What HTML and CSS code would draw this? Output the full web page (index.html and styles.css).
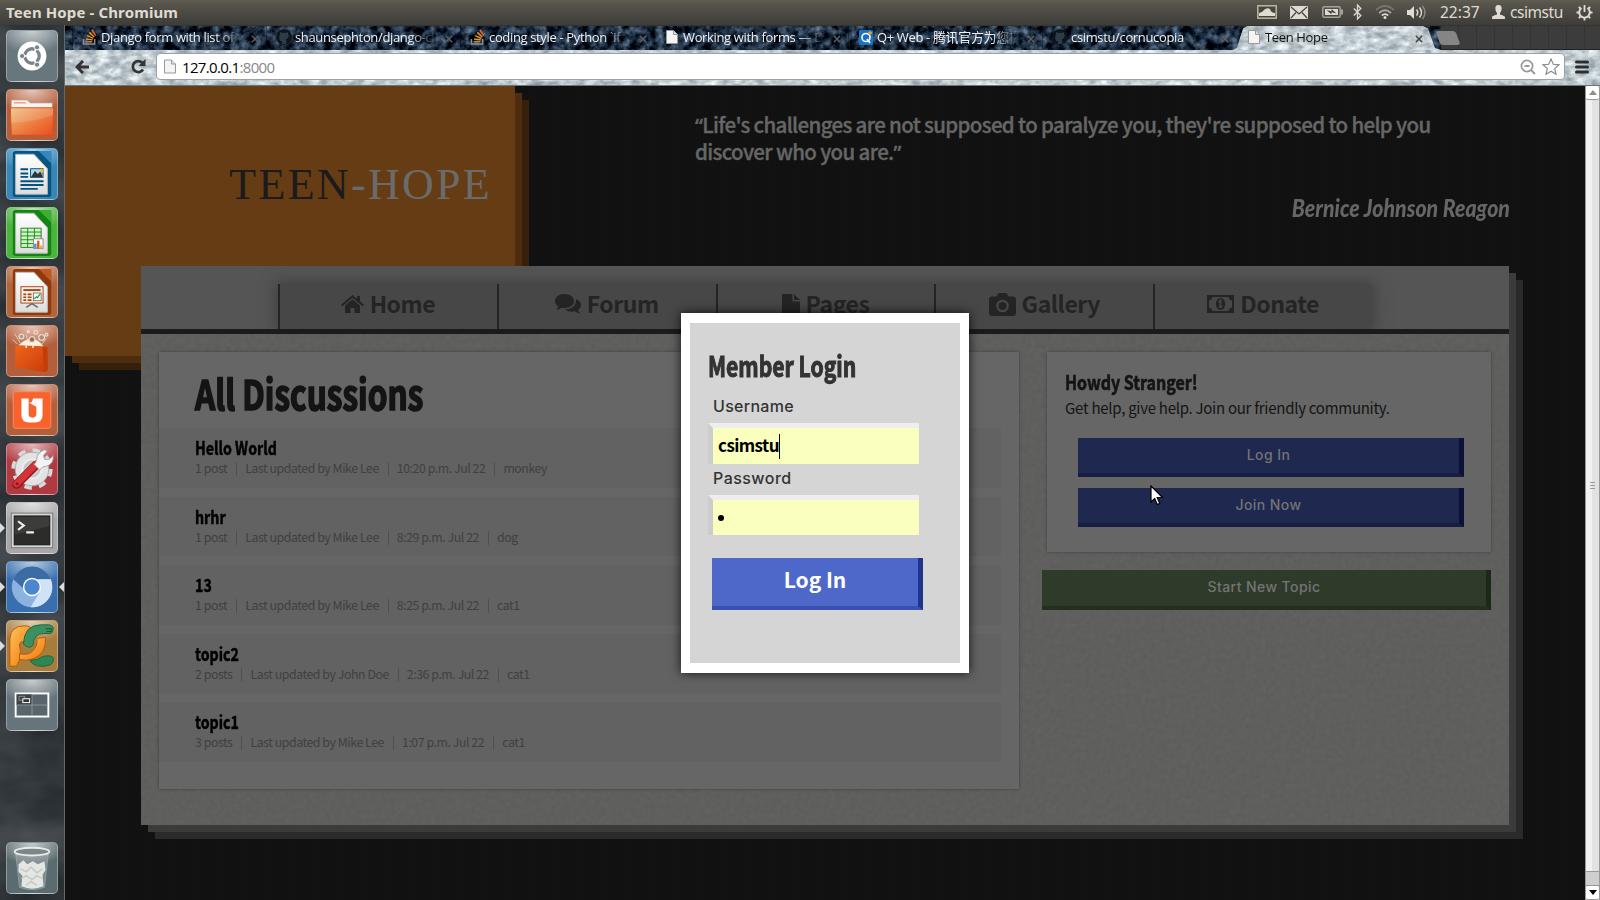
FILE: index.html
```html
<!DOCTYPE html>
<html lang="en">
<head>
<meta charset="utf-8">
<title>Teen Hope - Chromium</title>
<link rel="stylesheet" href="styles.css">
</head>
<body>
<svg class="defs" width="0" height="0" aria-hidden="true">
  <defs>
    <filter id="ice" x="0" y="0" width="100%" height="100%" color-interpolation-filters="sRGB">
      <feTurbulence type="fractalNoise" baseFrequency="0.09 0.16" numOctaves="5" seed="4"/>
      <feColorMatrix values="0.6 0 0 0 0.46  0.56 0 0 0 0.52  0.54 0 0 0 0.55  0 0 0 0 1"/>
    </filter>
    <filter id="rock" x="0" y="0" width="100%" height="100%" color-interpolation-filters="sRGB">
      <feTurbulence type="fractalNoise" baseFrequency="0.12 0.12" numOctaves="5" seed="9"/>
      <feColorMatrix values="0.75 0 0 0 -0.26  0.85 0 0 0 -0.25  0.95 0 0 0 -0.23  0 0 0 0 1"/>
    </filter>
    <filter id="wall" x="0" y="0" width="100%" height="100%" color-interpolation-filters="sRGB">
      <feTurbulence type="fractalNoise" baseFrequency="0.012 0.02" numOctaves="4" seed="12"/>
      <feColorMatrix values="0.22 0 0 0 0.11  0.22 0 0 0 0.13  0.22 0 0 0 0.145  0 0 0 0 1"/>
    </filter>
    <filter id="paper" x="0" y="0" width="100%" height="100%" color-interpolation-filters="sRGB">
      <feTurbulence type="fractalNoise" baseFrequency="0.2" numOctaves="3" seed="2"/>
      <feColorMatrix values="0.035 0 0 0 0.355  0.035 0 0 0 0.355  0.035 0 0 0 0.351  0 0 0 0 1"/>
    </filter>
    <linearGradient id="sheet" x1="0" y1="0" x2="0" y2="1"><stop offset="0" stop-color="#fff"/><stop offset="1" stop-color="#ddd"/></linearGradient>
    <linearGradient id="folder" x1="0" y1="0" x2="1" y2="1"><stop offset="0" stop-color="#f0bd7c"/><stop offset=".5" stop-color="#ec8244"/><stop offset="1" stop-color="#ee4a1c"/></linearGradient>
    <linearGradient id="bag" x1="0" y1="0" x2="1" y2="1"><stop offset="0" stop-color="#f0641c"/><stop offset="1" stop-color="#c83c08"/></linearGradient>
    <linearGradient id="pyc" x1="0" y1="0" x2="1" y2="1"><stop offset="0" stop-color="#ffc05a"/><stop offset="1" stop-color="#f07808"/></linearGradient>
    <symbol id="so" viewBox="0 0 16 17"><path d="M1 10.500v5.500h12v-5.500" fill="none" stroke="#8d8f92" stroke-width="1.500"/><path d="M3.500 13.500h7" stroke="#b08a5a" stroke-width="1.500"/><path d="M3.800 10.600l7 1M5 7l6.500 3M7.200 3.600l5.400 4.900" stroke="#f0961e" stroke-width="1.500"/><path d="M10 .8l4 6.200" stroke="#f0642a" stroke-width="1.600"/></symbol>
    <symbol id="gh" viewBox="0 0 16 16"><circle cx="8" cy="8" r="7.800" fill="#101418"/><path d="M6 15v-2.500C3.600 11.900 3 10.200 3.300 8.200L4 4.400V3l2 .9q2-.5 4 0l2-.9v1.600c1.700 3-.1 5.500-2.400 5.900.5.500.7 1 .7 2V15z" fill="#2c3c48"/></symbol>
    <symbol id="doc" viewBox="0 0 12 14"><path d="M.5.500h7l4 4v9H.5z" fill="#f4f4f4" stroke="#999"/><path d="M7.500.500v4h4" fill="#ddd" stroke="#999"/></symbol>
    <symbol id="x" viewBox="0 0 8 8"><path d="M.8.800l6.400 6.400M7.200.800L.8 7.200" stroke="currentColor" stroke-width="1.500"/></symbol>
  </defs>
</svg>

<header class="topbar">
  <span class="topbar-title">Teen Hope - Chromium</span>
  <div class="indicators">
    <svg class="i-pic" width="20" height="14" viewBox="0 0 20 14"><rect x=".8" y=".8" width="18.400" height="12.400" fill="#48463f" stroke="#b9b8a0" stroke-width="1.500"/><path d="M2 11V8q3 0 5-3 3-3 6-1 1 4 5 4v3z" fill="#dfdbd2"/></svg>
    <svg class="i-mail" width="18" height="13" viewBox="0 0 18 13"><rect width="18" height="13" rx="1" fill="#dfdbd2"/><path d="M1 1l8 7 8-7M1 12l5-5.500M17 12l-5-5.500" fill="none" stroke="#45433d" stroke-width="1.200"/></svg>
    <svg class="i-bat" width="21" height="12" viewBox="0 0 21 12"><rect x=".8" y=".8" width="17.400" height="10.400" rx="1.500" fill="none" stroke="#a5a297" stroke-width="1.500"/><rect x="3" y="3" width="13" height="6" fill="#dfdbd2"/><rect x="19" y="3.500" width="2" height="5" fill="#a5a297"/><path d="M4.500 4l5 1.200V3l5 4.500-5-1.200v2.200z" fill="#45433d"/></svg>
    <svg class="i-bt" width="9" height="16" viewBox="0 0 9 16"><path d="M.8 4.500l7 7L4.500 15V1l3.300 3.500-7 7" fill="none" stroke="#dfdbd2" stroke-width="1.300"/></svg>
    <svg class="i-wifi" width="20" height="14" viewBox="0 0 20 14"><path d="M1 5Q10-3 19 5" fill="none" stroke="#77756c" stroke-width="1.700"/><path d="M4 8q6-5.500 12 0" fill="none" stroke="#aaa79d" stroke-width="1.700"/><path d="M6.800 10.500q3.200-2.800 6.400 0" fill="none" stroke="#dfdbd2" stroke-width="1.700"/><circle cx="10" cy="12.500" r="1.500" fill="#dfdbd2"/></svg>
    <svg class="i-vol" width="20" height="15" viewBox="0 0 20 15"><path d="M0 5h3l4-4v13l-4-4H0z" fill="#dfdbd2"/><path d="M9.500 4.500q2.500 3 0 6M12.500 2.500q4 5 0 10" fill="none" stroke="#dfdbd2" stroke-width="1.500"/><path d="M15.500 1q5 6.500 0 13" fill="none" stroke="#8b887e" stroke-width="1.500"/></svg>
    <span class="i-clock">22:37</span>
    <svg class="i-user" width="13" height="14" viewBox="0 0 13 14"><path d="M6.500 0C9 0 9.800 1.500 9.600 4c-.2 2-.8 3-1.600 4v1.500c2 1 5 1 5 3V14H0v-1.500c0-2 3-2 5-3V8C4.200 7 3.600 6 3.400 4 3.200 1.500 4 0 6.500 0z" fill="#dfdbd2"/></svg>
    <span class="i-name">csimstu</span>
    <svg class="i-gear" width="17" height="17" viewBox="0 0 17 17"><path d="M5.500 4a5.300 5.300 0 1 0 6 0" fill="none" stroke="#dfdbd2" stroke-width="2"/><path d="M8.500 1v7" stroke="#dfdbd2" stroke-width="1.800"/><path d="M.5 8.500H3M14 8.500h2.500M8.500 14v2.500M2.800 14.200l1.700-1.700M14.200 14.200l-1.700-1.700M2.800 2.800l1.700 1.700M14.200 2.800l-1.700 1.700" stroke="#dfdbd2" stroke-width="1.800"/></svg>
  </div>
</header>

<div class="desktop">
  <nav class="launcher">
    <svg class="texture"><rect width="100%" height="100%" filter="url(#wall)"/></svg>
    <div class="tile t-dash"><svg viewBox="0 0 52 52"><circle cx="26" cy="26" r="15" fill="#fff"/><circle cx="26" cy="26" r="7.500" fill="none" stroke="#78848a" stroke-width="3.500"/><path d="M26 26L14 26M26 26l6-10.400M26 26l6 10.400" stroke="#fff" stroke-width="1.800"/><circle cx="26" cy="26" r="5.500" fill="#fff"/><g fill="#78848a" stroke="#fff"><circle cx="15.700" cy="26" r="2.700"/><circle cx="31.200" cy="17" r="2.700"/><circle cx="31.200" cy="35" r="2.700"/></g></svg></div>
    <div class="tile t-orange"><svg viewBox="0 0 52 52"><path d="M4.500 20V11.500q0-1 1-1h15l4 3h22.500V20z" fill="#f6f4f2" stroke="#b9aaa0" stroke-width=".7"/><path d="M7 12.500h12l1.500 1.500H7z" fill="#f0a080"/><path d="M3.500 18.500h45l-1 28.500h-43z" fill="url(#folder)" stroke="#d6521c"/><path d="M4 19h44v7Q26 34 4 34z" fill="#fff" opacity=".15"/></svg></div>
    <div class="tile t-blue"><svg viewBox="0 0 52 52"><rect x="6" y="2" width="40" height="48" rx="3" fill="#075583"/><path d="M33 2h13v13z" fill="#3389b9"/><path d="M9 5.500h19l14 15V47H9z" fill="url(#sheet)" stroke="#bbb"/><path d="M14 21h8M14 25.500h8M14 29h8M14 33.500h24M14 37.500h24M14 41.500h18" stroke="#06527f" stroke-width="2"/><rect x="24.500" y="20.500" width="13" height="9" fill="#a9d6ef" stroke="#06527f"/><path d="M25 29l4-6 3 3 3-3 2 6z" fill="#333"/><circle cx="36" cy="22.500" r="2" fill="#f2c118"/></svg></div>
    <div class="tile t-green"><svg viewBox="0 0 52 52"><rect x="6" y="2" width="40" height="48" rx="3" fill="#128512"/><path d="M33 2h13v13z" fill="#3fae34"/><path d="M9 5.500h19l14 15V47H9z" fill="url(#sheet)" stroke="#bbb"/><path d="M14.500 21h21v20h-21zM14.500 25h21M14.500 29h21M14.500 33h21M14.500 37h21M21.500 21v20M28.500 21v20" fill="#d2f5c8" stroke="#1c8a1c"/><rect x="27.500" y="32" width="10" height="10" fill="#fff" stroke="#888"/><path d="M29.500 42v-5" stroke="#3a9ae0" stroke-width="2.500"/><path d="M32.500 42v-8" stroke="#e05a1c" stroke-width="2.500"/><path d="M35.500 42v-3" stroke="#f0b41c" stroke-width="2.500"/></svg></div>
    <div class="tile t-brown"><svg viewBox="0 0 52 52"><rect x="6" y="2" width="40" height="48" rx="3" fill="#93380b"/><path d="M33 2h13v13z" fill="#bb5a24"/><path d="M9 5.500h19l14 15V47H9z" fill="url(#sheet)" stroke="#bbb"/><rect x="14.500" y="20.500" width="23" height="17" fill="#fbeee6" stroke="#a54514"/><path d="M17 24h18" stroke="#a54514" stroke-width="2"/><path d="M17 28.500h3M17 31.500h3M17 34.500h3M21.500 28.500h4M21.500 31.500h4M21.500 34.500h4" stroke="#a54514" stroke-width="1.700"/><rect x="27.500" y="27" width="8" height="8" fill="#fff" stroke="#777"/><path d="M28.500 33l2-2 1 1 3-4" fill="none" stroke="#2aa02a" stroke-width="1.300"/><path d="M26 38l-6 4M26 38l6 4" stroke="#666" stroke-width="1.500"/></svg></div>
    <div class="tile t-orange"><svg viewBox="0 0 52 52"><path d="M12 20q14-14 26 1z" fill="#fff2d8"/><g fill="none" stroke="#f0d8c8" stroke-width="1.300"><circle cx="15" cy="11" r="2.500" fill="#8fa0a8"/><circle cx="26" cy="14" r="3" fill="#8a7468"/><circle cx="30" cy="6.500" r="2"/><circle cx="36" cy="12" r="3" fill="#a98d80"/><circle cx="41" cy="9" r="1.500"/><circle cx="22" cy="6" r="1.200"/></g><path d="M8 8l6 10M20 9l2 8M41 13l-5 6M6 14l5 5" stroke="#ffd8b8" stroke-width=".8"/><path d="M8.500 20.500L42 22l.5 24-4 2L8.500 43z" fill="url(#bag)"/><path d="M37 21l5 1 .5 24-4 2z" fill="#c13d0a"/><path d="M20 23v-5h7v5" fill="none" stroke="#ffeeda" stroke-width="1.500"/></svg></div>
    <div class="tile t-orange"><svg viewBox="0 0 52 52"><rect x="6.500" y="7" width="39" height="38" rx="2" fill="#f9622c" stroke="#ff8a5c"/><path d="M15 14h7.500v16q0 4 4 4t4-4V14H37v17q0 8-8 8h-6q-8 0-8-8z" fill="#fff"/><path d="M22 18q4 2 5-4h4v9" fill="#fff"/></svg></div>
    <div class="tile t-red"><svg viewBox="0 0 52 52"><circle cx="26" cy="26" r="19" fill="none" stroke="#d9d9d9" stroke-width="5" stroke-dasharray="7.500 7.420"/><circle cx="26" cy="26" r="17.500" fill="#e2e2e2" stroke="#aaa"/><circle cx="26" cy="26" r="10" fill="#c9c9c9" stroke="#eee" stroke-width="2"/><path d="M10 42l20-20" stroke="#921418" stroke-width="9" stroke-linecap="round"/><path d="M10 41.500L31 20.500" stroke="#d33438" stroke-width="7" stroke-linecap="round"/><path d="M28 21q2-1 3-5 0-7 8-10l3 1-4 5 1 4 5 0 4-4q1 9-7 11-4 0-7 4z" fill="#f3f3f3" stroke="#999" stroke-width=".8"/><circle cx="10.500" cy="41.500" r="1.500" fill="#8a1418"/></svg></div>
    <div class="tile t-grey running"><svg viewBox="0 0 52 52"><rect x="4.500" y="10.500" width="43" height="36" fill="#d5d5d5" stroke="#777"/><rect x="7.500" y="13.500" width="37" height="30" fill="#2c2c2a" stroke="#111"/><path d="M8 14h36v10L8 33z" fill="#fff" opacity=".08"/><path d="M11.500 19l6 4.500-6 4.500M20 30.500h8" fill="none" stroke="#eee" stroke-width="2.200"/></svg></div>
    <div class="tile t-chrome running focused"><svg viewBox="0 0 52 52"><circle cx="26" cy="26" r="21" fill="#8cb3e0"/><path d="M6.500 18A21 21 0 0 1 45.500 18H26q-9 1-9.500 9z" fill="#3c6ca6"/><path d="M45.500 18a21 21 0 0 1-21 29l9-15q4-7-2-14z" fill="#d0e2f5"/><circle cx="26" cy="26" r="9.500" fill="#fff"/><circle cx="26" cy="26" r="8" fill="#4b86cf"/></svg></div>
    <div class="tile t-pycharm running"><svg viewBox="0 0 52 52"><path d="M3 46V18Q4 5 18 5q7 0 8 4-5 6-6 14-6-4-7 2l1 7q0 9-4 15H3z" fill="url(#pyc)" stroke="#b75a08"/><path d="M13 34q10 2 14-3 5-5 4-13l9-1q1 17-12 22-8 3-15 1z" fill="url(#pyc)" stroke="#b75a08"/><path d="M17 24q1-20 18-20h9q5 1 4 5-1 5-5 4l-5 0q-10 0-11 12-4 5-10-1z" fill="#3c9060" stroke="#1c6a3c"/><path d="M24 41q8 0 13-4 8-2 11 1 2 8-9 9-11 1-15-6z" fill="#2f8554" stroke="#1c6a3c"/><path d="M40 8h6v3h-5" fill="none" stroke="#14532d"/></svg></div>
    <div class="tile t-work"><svg viewBox="0 0 52 52"><rect x="9" y="14" width="34" height="24" fill="#59656b" stroke="#fff" stroke-width="2"/><rect x="10" y="15" width="16" height="11" fill="#3c4246"/><path d="M26 15v22M10 26h32" stroke="#8b969b"/><rect x="12.500" y="17" width="6" height="4" fill="none" stroke="#888"/><rect x="16.500" y="19.500" width="7" height="4" fill="#333" stroke="#fff"/></svg></div>
    <div class="tile t-trash"><svg viewBox="0 0 52 52"><path d="M9 10h34l-4 36q-13 5-26 0z" fill="#a8b2b2" opacity=".45" stroke="#cdd4d4"/><path d="M12 22l5-4 4 4 6-3 5 3 7-3 1 9-3 5 1 12q-12 5-23 0l1-11-4-4z" fill="#e4e6e4"/><path d="M14 27l6 3 5-5 6 6 6-4M15 37l5-3 6 4 5-4 6 3M20 44l5-4 6 4" fill="none" stroke="#c3c8c6" stroke-width="1.500"/><ellipse cx="26" cy="9" rx="18" ry="4" fill="#7b8685" stroke="#e6eaea" stroke-width="2"/></svg></div>
  </nav>

  <section class="browser">
    <div class="tabstrip">
      <svg class="texture"><rect width="100%" height="100%" filter="url(#rock)"/></svg>
      <div class="tab"><svg width="14" height="16"><use href="#so"/></svg><span class="tab-text">Django form with list of</span><svg class="tab-x" width="8" height="8"><use href="#x"/></svg></div>
      <div class="tab"><svg width="16" height="16"><use href="#gh"/></svg><span class="tab-text">shaunsephton/django-ck</span><svg class="tab-x" width="8" height="8"><use href="#x"/></svg></div>
      <div class="tab"><svg width="14" height="16"><use href="#so"/></svg><span class="tab-text">coding style - Python `if</span><svg class="tab-x" width="8" height="8"><use href="#x"/></svg></div>
      <div class="tab"><svg width="12" height="14"><use href="#doc"/></svg><span class="tab-text">Working with forms — D</span><svg class="tab-x" width="8" height="8"><use href="#x"/></svg></div>
      <div class="tab"><svg width="14" height="15" viewBox="0 0 14 15"><rect width="14" height="15" rx="1" fill="#1674c0"/><circle cx="7" cy="7.500" r="4" fill="none" stroke="#fff" stroke-width="1.600"/><path d="M8 9l3 4" stroke="#fff" stroke-width="1.600"/><path d="M11 1v4M9 3h4" stroke="#f5a21c" stroke-width="1.300"/></svg><span class="tab-text">Q+ Web - 腾讯官方为您提</span><svg class="tab-x" width="8" height="8"><use href="#x"/></svg></div>
      <div class="tab"><svg width="16" height="16"><use href="#gh"/></svg><span class="tab-text">csimstu/cornucopia</span><svg class="tab-x" width="8" height="8"><use href="#x"/></svg></div>
      <div class="tab active"><div class="tab-shape"><svg class="texture"><rect width="100%" height="100%" filter="url(#ice)"/></svg></div><svg width="12" height="14"><use href="#doc"/></svg><span class="tab-text">Teen Hope</span><svg class="tab-x" width="8" height="8"><use href="#x"/></svg></div>
      <div class="tab-rest"><span class="newtab"></span></div>
    </div>

    <div class="toolbar">
      <svg class="texture"><rect width="100%" height="100%" filter="url(#ice)"/></svg>
      <svg class="b-back" width="15" height="14" viewBox="0 0 15 14"><path d="M8 1L2 7l6 6M2.500 7H14" fill="none" stroke="#333" stroke-width="3"/></svg>
      <svg class="b-fwd" width="15" height="14" viewBox="0 0 15 14"><path d="M7 1l6 6-6 6M12.500 7H1" fill="none" stroke="#a9b3b9" stroke-width="3" opacity=".6"/></svg>
      <svg class="b-load" width="15" height="15" viewBox="0 0 15 15"><path d="M12 10.500A5.500 5.500 0 1 1 11.500 4" fill="none" stroke="#333" stroke-width="2.800"/><path d="M14.500 0v7h-7z" fill="#333"/></svg>
      <div class="omnibox">
        <svg width="12" height="15"><use href="#doc"/></svg>
        <span class="url">127.0.0.1<i>:8000</i></span>
        <svg class="o-zoom" width="16" height="16" viewBox="0 0 16 16"><circle cx="7" cy="7" r="5.600" fill="none" stroke="#999" stroke-width="1.700"/><path d="M4.500 7h5M11 11l4 4" stroke="#999" stroke-width="1.900"/></svg>
        <svg width="18" height="17" viewBox="0 0 18 17"><path d="M9 1l2.300 5.300 5.700.5-4.300 3.800 1.300 5.600L9 13.300 4 16.200l1.300-5.600L1 6.800l5.700-.5z" fill="#fff" stroke="#8a8a8a" stroke-width="1.200"/></svg>
      </div>
      <svg class="b-menu" width="14" height="14" viewBox="0 0 14 14"><path d="M1.500 2h11M1.500 7h11M1.500 12h11" stroke="#2c2f31" stroke-width="3" stroke-linecap="round"/></svg>
    </div>

    <div class="viewport">
      <main class="page">
        <div class="hero">
          <div class="brand"><span class="brand-text">TEEN<em>-HOPE</em></span></div>
          <div class="quote">
            <div class="quote-text"><p><b>“</b>Life's challenges are not supposed to paralyze you, they're supposed to help you</p><p>discover who you are.<b>”</b></p></div>
            <p class="quote-by">Bernice Johnson Reagon</p>
          </div>
        </div>

        <div class="container">
          <nav class="menu">
            <div class="menu-items">
              <a class="menu-item"><svg width="23" height="18" viewBox="0 0 23 18"><path d="M11.500 4.200L19 10.500V18h-5.500v-5h-4v5H4v-7.500zM11.500 0l4.500 3.800V1h3v5.300l4 3.400-1.300 1.500L11.500 2.700 1.300 11.200 0 9.700z" fill="#242424"/></svg><span>Home</span></a>
              <a class="menu-item"><svg width="26" height="21" viewBox="0 0 26 21"><path d="M9.500 0C15 0 19 3.200 19 7s-4 7-9.500 7q-1.500 0-3-.3Q4.500 15.500 1 16q2-1.500 2.200-3.500C1.200 11.200 0 9.300 0 7c0-3.800 4-7 9.500-7zM21 5c3 1.300 5 3.500 5 6q0 3-2.700 5 .2 2 2.200 3.500-3.500-.3-5.500-2.300-5.500 1.500-10-1.700C16.500 15.500 21.500 11.500 21 5z" fill="#242424"/></svg><span>Forum</span></a>
              <a class="menu-item"><svg width="18" height="21" viewBox="0 0 18 21"><path d="M0 1q0-1 1-1h9.500v7.500H18V20q0 1-1 1H1q-1 0-1-1zM12 0l6 6h-6z" fill="#242424"/></svg><span>Pages</span></a>
              <a class="menu-item"><svg width="27" height="23" viewBox="0 0 27 23"><path fill-rule="evenodd" d="M3 3.500h4.500L9 .8q.5-.8 1.500-.8h6q1 0 1.500.8l1.500 2.700H24q3 0 3 3V20q0 3-3 3H3q-3 0-3-3V6.500q0-3 3-3zm10.500 3.200a6.300 6.300 0 1 0 0 12.600 6.300 6.300 0 0 0 0-12.600zm0 2.300a4 4 0 1 1 0 8 4 4 0 0 1 0-8z" fill="#242424"/></svg><span>Gallery</span></a>
              <a class="menu-item"><svg width="27" height="18" viewBox="0 0 27 18"><path fill-rule="evenodd" d="M0 0h27v18H0zM5.500 2Q5 5 2 5.500v7q3 .5 3.500 3.500h16q.5-3 3.500-3.500v-7Q22 5 21.500 2z" fill="#242424"/><ellipse cx="13.500" cy="9" rx="4.700" ry="6" fill="#242424"/><path d="M11.500 7l2-1.500v6M11.500 12h4" fill="none" stroke="#474747" stroke-width="1.700"/></svg><span>Donate</span></a>
            </div>
          </nav>
          <div class="content">
            <svg class="texture"><rect width="100%" height="100%" filter="url(#paper)"/></svg>
            <section class="panel discussions">
              <h1><span>All Discussions</span></h1>
              <article class="topic"><h2><span>Hello World</span></h2><p><span>1 post</span><span>Last updated by Mike Lee</span><span>10:20 p.m. Jul 22</span><span>monkey</span></p></article>
              <article class="topic"><h2><span>hrhr</span></h2><p><span>1 post</span><span>Last updated by Mike Lee</span><span>8:29 p.m. Jul 22</span><span>dog</span></p></article>
              <article class="topic"><h2><span>13</span></h2><p><span>1 post</span><span>Last updated by Mike Lee</span><span>8:25 p.m. Jul 22</span><span>cat1</span></p></article>
              <article class="topic"><h2><span>topic2</span></h2><p><span>2 posts</span><span>Last updated by John Doe</span><span>2:36 p.m. Jul 22</span><span>cat1</span></p></article>
              <article class="topic"><h2><span>topic1</span></h2><p><span>3 posts</span><span>Last updated by Mike Lee</span><span>1:07 p.m. Jul 22</span><span>cat1</span></p></article>
            </section>
            <aside class="side">
              <section class="panel welcome">
                <h3><span>Howdy Stranger!</span></h3>
                <p>Get help, give help. Join our friendly community.</p>
                <a class="btn blue">Log In</a>
                <a class="btn blue">Join Now</a>
              </section>
              <a class="btn green">Start New Topic</a>
            </aside>
          </div>
        </div>

        <form class="login">
          <h3><span>Member Login</span></h3>
          <label>Username</label>
          <div class="field"><span class="value">csimstu</span><span class="caret"></span></div>
          <label class="second">Password</label>
          <div class="field pass"><span class="dot"></span></div>
          <div class="submit">Log In</div>
        </form>

        <svg class="cursor" width="14" height="21" viewBox="0 0 14 21"><path d="M1 1v16l3.700-3.500 2.600 6 2.500-1.100-2.600-5.900h5.300z" fill="#fff" stroke="#000" stroke-width="1.200"/></svg>
      </main>
      <div class="scrollbar">
        <div class="sb-btn"><svg width="8" height="5" viewBox="0 0 8 5"><path d="M4 0l4 5H0z" fill="#8f8f8f"/></svg></div>
        <div class="sb-thumb"><i></i><i></i><i></i></div>
        <div class="sb-gap"></div>
        <div class="sb-btn"><svg width="8" height="5" viewBox="0 0 8 5"><path d="M0 0h8L4 5z" fill="#000"/></svg></div>
      </div>
    </div>
  </section>
</div>
</body>
</html>
```

FILE: styles.css
```css
* { box-sizing: border-box; margin: 0; padding: 0; }
body {
  width: 1600px; height: 900px; overflow: hidden;
  display: flex; flex-direction: column;
  background: #111; color: #141414;
  font-family: "Noto Sans CJK SC", "Noto Sans", sans-serif;
}
svg { display: block; flex: none; }
.defs { position: absolute; }
.texture { position: absolute; inset: 0; width: 100%; height: 100%; }

/* system panel */
.topbar {
  height: 25px; flex: none; padding: 0 7px 1px 6px;
  display: flex; justify-content: space-between; align-items: center;
  background: linear-gradient(#5f5d50, #55534a 20%, #3d3c38);
  color: #dfdbd2; font-family: "Noto Sans", sans-serif;
}
.topbar-title { font-size: 15px; font-weight: 700; line-height: 24px; letter-spacing: .12px; }
.indicators { display: flex; align-items: center; height: 24px; font-size: 15.500px; line-height: 24px; }
.i-mail { margin-left: 13px; }
.i-bat { margin-left: 14px; }
.i-bt { margin-left: 10px; }
.i-wifi { margin-left: 13px; }
.i-vol { margin-left: 12px; }
.i-clock { margin-left: 13px; width: 39px; }
.i-user { margin-left: 13px; }
.i-name { margin-left: 5px; width: 53px; letter-spacing: -.45px; }
.i-gear { margin-left: 13px; }

.desktop { flex: 1; display: flex; min-height: 0; }

/* launcher */
.launcher {
  position: relative; width: 65px; flex: none; padding: 5px 0 6px 6px;
  display: flex; flex-direction: column; gap: 7px; border-right: 1px solid #65696b;
}
.tile {
  position: relative; width: 52px; height: 52px; border-radius: 5px; flex: none;
  border: 1px solid rgba(255,255,255,.3);
  background-image: radial-gradient(ellipse 70% 45% at 50% 0, rgba(255,255,255,.65), rgba(255,255,255,0));
}
.tile > svg { width: 50px; height: 50px; }
.t-dash { background-color: #68777e; }
.t-orange { background-color: #b45f3c; }
.t-blue { background-color: #3886b6; }
.t-green { background-color: #4db33f; }
.t-brown { background-color: #b1653c; }
.t-red { background-color: #b03a42; }
.t-grey { background-color: #a8a6a6; }
.t-chrome { background-color: #396fae; }
.t-pycharm { background-color: #a87c3c; }
.t-work { background-color: #66747b; }
.t-trash { background-color: #5b6c70; margin-top: auto; }
.running::before {
  content: ""; position: absolute; left: -7px; top: 20px;
  border: 5px solid transparent; border-left-color: #ddd; border-right: 0;
}
.focused::after {
  content: ""; position: absolute; right: -7px; top: 20px;
  border: 5px solid transparent; border-right-color: #ddd; border-left: 0;
}

/* browser chrome */
.browser { flex: 1; display: flex; flex-direction: column; min-width: 0; }
.tabstrip { position: relative; height: 25px; flex: none; display: flex; padding-left: 7px; border-top: 1px solid #333; }
.tab {
  position: relative; width: 194px; flex: none; height: 24px; padding: 0 7px 2px 9px;
  display: flex; align-items: center; color: #eef2f5;
  font: 13px/22px "Open Sans", "Noto Sans CJK SC", sans-serif;
  border-left: 1px solid rgba(0,0,0,.35);
}
.tab > svg:not(.tab-x) { width: 16px; margin-right: 3px; }
.tab-text {
  position: relative; width: 146px; overflow: hidden; white-space: nowrap; letter-spacing: -.35px;
  -webkit-mask-image: linear-gradient(90deg, #000 78%, transparent 97%);
  mask-image: linear-gradient(90deg, #000 78%, transparent 97%);
}
.tab-x { position: relative; top: 2px; margin-left: auto; color: #5a5f65; }
.tab.active { width: 205px; color: #111; border: 0; padding: 0 18px 2px 10px; }
.tab.active > svg { position: relative; }
.tab.active .tab-x { color: #444; }
.tab-shape { position: absolute; inset: 0 -6px 0 -3px; clip-path: polygon(0 100%, 4px 90%, 10px 10%, 14px 0, 190px 0, 195px 10%, 202px 92%, 208px 100%); }
.tab-rest { position: relative; flex: 1; background: repeating-linear-gradient(90deg, #3c3c3c 0 17px, #333 17px 18px); border-bottom: 1px solid #222; }
.newtab { display: block; width: 20px; height: 14px; margin: 5px 0 0 -3px; background: #858585; border-radius: 3px; transform: skewX(20deg); }
.toolbar { position: relative; height: 36px; flex: none; display: flex; align-items: center; padding: 0 11px 2px 10px; border-bottom: 1px solid #6d7679; }
.toolbar > svg:not(.texture), .omnibox { position: relative; }
.b-fwd { margin-left: 14px; }
.b-load { margin-left: 12px; }
.omnibox {
  margin: 0 10px 0 10px; flex: 1; height: 27px; padding: 0 4px 0 7px; display: flex; align-items: center;
  background: #fff; border: 1px solid #98a2a8; border-radius: 4px;
}
.url { flex: 1; margin-left: 6px; color: #000; font: 15px/24px "Open Sans", sans-serif; letter-spacing: -.65px; }
.url i { font-style: normal; color: #888; }
.o-zoom { margin-right: 6px; }

/* page */
.viewport { flex: 1; display: flex; min-height: 0; }
.page {
  position: relative; flex: 1; overflow: hidden; background-color: #121212;
  background-image: repeating-linear-gradient(90deg, rgba(0,0,0,.1) 0 1px, transparent 1px 3px);
}
.hero { display: flex; height: 180px; }
.brand {
  width: 450px; height: 270px; flex: none; padding: 69px 23px 0 0; text-align: right;
  background: #663c14;
  box-shadow: 7px 7px 0 #4e2d0f, 14px 14px 0 #37200b;
}
.brand-text { font: 44px/60px "Liberation Serif", serif; color: #1b1b1b; letter-spacing: 2.300px; white-space: nowrap; }
.brand-text em { font-style: normal; color: #6b6b6b; }
.quote { width: 815px; margin-left: 180px; padding-top: 25px; color: #666; }
.quote-text { font-size: 20.500px; line-height: 27px; font-weight: 500; white-space: nowrap; letter-spacing: -.66px; -webkit-text-stroke: .35px #666; }
.quote-text b { font-family: "Noto Sans", sans-serif; font-weight: 500; line-height: 20px; }
.quote-by { margin-top: 25px; text-align: right; font: italic 900 24px/36px "Lato", sans-serif; transform: scaleX(.887); transform-origin: right; }

.container { position: relative; width: 1368px; height: 559px; margin-left: 76px; box-shadow: 7px 7px 0 #3b3b3b, 14px 14px 0 #2a2a2a; }
.menu { height: 68px; background: #555; border-bottom: 5px solid #1b1b1b; padding: 18px 137px 0; overflow: hidden; }
.menu-items { display: flex; height: 45px; background: #474747; box-shadow: 0 0 14px 2px #3f3f3f; }
.menu-item {
  flex: 1; display: flex; align-items: center; justify-content: center; gap: 6px; padding: 0 1px 7px 0;
  border-left: 2px solid #242424; color: #242424; font-size: 23px; line-height: 38px; font-weight: 700; letter-spacing: -.45px;
}
.menu-item svg { position: relative; top: 1px; }
.content { position: relative; height: 491px; display: flex; padding: 18px; align-items: flex-start; }
.panel { position: relative; background: #666; box-shadow: 0 0 3px rgba(0,0,0,.35); }
.discussions { width: 860px; height: 437px; padding-top: 15px; }
h1, h2, h3 { font-weight: 700; white-space: nowrap; }
h1 span, h2 span, h3 span { display: inline-block; transform-origin: left; }
h1 { height: 50px; margin: 0 0 11px 36px; font-size: 41px; line-height: 50px; -webkit-text-stroke: 1.700px; }
h1 span { transform: scaleX(.77); }
.topic { width: 842px; height: 59.600px; margin-bottom: 9px; padding: 8px 0 0 36px; background: #626262; }
.topic h2 { font-size: 18px; line-height: 22px; color: #000; -webkit-text-stroke: .5px; }
.topic h2 span { transform: scaleX(.79); }
.topic p { display: flex; font-size: 12.300px; line-height: 20px; color: #404040; letter-spacing: -.43px; }
.topic p span { white-space: nowrap; }
.topic p span + span { margin-left: 9px; padding-left: 9px; background: linear-gradient(#505050, #505050) 0 4px / 1px 14px no-repeat; }
.side { position: relative; width: 449px; margin-left: 23px; }
.welcome { margin-left: 5px; height: 200px; padding: 18px 18px 0; }
.welcome h3 { font-size: 20px; line-height: 24px; -webkit-text-stroke: .6px; }
.welcome h3 span { transform: scaleX(.8); }
.welcome p { margin: 4px 0 20px; font-size: 15px; line-height: 20px; white-space: nowrap; letter-spacing: -.27px; }
.btn {
  display: block; height: 39px; text-align: center; color: #747474;
  font: 500 14px/34px "Inter", sans-serif; letter-spacing: .42px; border-style: solid; border-width: 0 5px 4px 0;
}
.blue { width: 386px; margin: 0 0 11px 13px; background: #1f284f; border-color: #0b1238 #0b1238 #161e44; }
.green { height: 40px; margin-top: 18px; background: #2f3b2a; border-color: #1d281b #1d281b #242f20; }

/* login dialog */
.login {
  position: absolute; left: 616px; top: 227px; width: 288px; height: 360px; padding: 25px 18px 0;
  background: #d5d5d5; border: solid #fff; border-width: 10px 9px;
  box-shadow: 0 0 10px rgba(0,0,0,.8); color: #333;
}
.login h3 { font-size: 28px; line-height: 34px; -webkit-text-stroke: 1.100px; }
.login h3 span { transform: scaleX(.755); }
.login label { display: block; margin-left: 5px; height: 29px; font: 500 16px/24px "Inter", sans-serif; letter-spacing: .3px; }
.login h3 + label { margin-top: 12px; }
.login label.second { padding-top: 2px; height: 31px; letter-spacing: .45px; }
.field {
  display: flex; align-items: center; width: 211px; height: 41px; padding-left: 5px;
  background: #faffbd; border: solid; border-width: 5px 0 0 5px; border-color: #eee #ccc #ccc #ccc;
  color: #000; font-size: 17px; line-height: 34px; font-weight: 700;
}
.value { letter-spacing: -.58px; margin-top: -3px; }
.field.pass { height: 40px; }
.caret { width: 1px; height: 25px; background: #000; }
.dot { width: 6px; height: 6px; margin-top: 1px; border-radius: 50%; background: #000; }
.submit {
  margin: 23px 0 0 4px; width: 211px; height: 52px; text-align: center; color: #fff;
  background: #4d68c8; border-style: solid; border-width: 0 5px 4px 0; border-color: #1f328c #1f328c #3850ae;
  font-size: 21px; line-height: 42px; font-weight: 700;
}
.cursor { position: absolute; left: 1085px; top: 399px; }

/* scrollbar */
.scrollbar { width: 15px; flex: none; display: flex; flex-direction: column; border: 1px solid #999; border-width: 0 1px; background: #cfcfcf; }
.sb-btn { height: 14px; background: #fff; border: 1px solid #999; border-width: 0 0 1px; border-radius: 2px; display: grid; place-items: center; }
.sb-thumb { flex: 1; display: flex; flex-direction: column; justify-content: center; align-items: center; gap: 2px; background: linear-gradient(90deg, #f1f1f1 50%, #e2e2e2 50%); border-bottom: 1px solid #999; }
.sb-thumb i { width: 5px; height: 1px; background: #999; }
.sb-gap { height: 14px; border-bottom: 1px solid #999; }
```
